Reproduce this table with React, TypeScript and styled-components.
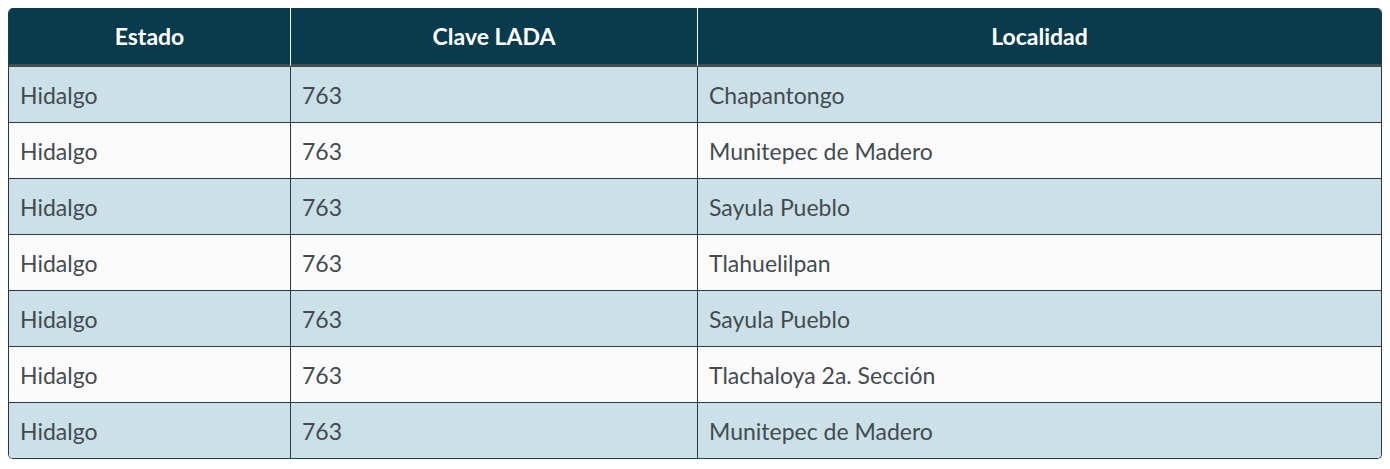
import React from 'react';
import styled, { createGlobalStyle } from 'styled-components';

const GlobalStyle = createGlobalStyle`
	body {
		margin: 8px;
		background: #ffffff;
		font-family: Lato, 'Open Sans', sans-serif;
	}
`;

const Table = styled.table`
	width: 100%;
	border-collapse: separate;
	border-spacing: 0;
	border: 1px solid #1d3d48;
	border-top: none;
	border-radius: 5px;
	overflow: hidden;
	box-shadow: 0 1px 3px rgba(0, 0, 0, 0.12);
	font-size: 23px;
	color: #444b4f;
`;

const HeadCell = styled.th`
	height: 56px;
	padding: 0 12px;
	background-color: #083b4b;
	color: #ffffff;
	font-weight: bold;
	font-size: 23px;
	text-align: center;
	border-bottom: 3px solid #4a4c4e;
	border-left: 1px solid #ffffff;
	&:first-child {
		border-left: none;
	}
`;

type RowProps = {
	$odd: boolean;
};
const Row = styled.tr<RowProps>`
	background-color: ${(props) => (props.$odd ? '#cbe0e7' : '#fbfbfb')};
	&:last-child > td {
		border-bottom: none;
	}
`;

const Cell = styled.td`
	height: 55px;
	padding: 0 11px;
	border-bottom: 1px solid #2c3a40;
	border-left: 1px solid #2c3a40;
	&:first-child {
		border-left: none;
	}
`;

const rows = [
	['Hidalgo', '763', 'Chapantongo'],
	['Hidalgo', '763', 'Munitepec de Madero'],
	['Hidalgo', '763', 'Sayula Pueblo'],
	['Hidalgo', '763', 'Tlahuelilpan'],
	['Hidalgo', '763', 'Sayula Pueblo'],
	['Hidalgo', '763', 'Tlachaloya 2a. Sección'],
	['Hidalgo', '763', 'Munitepec de Madero'],
];

const App = () => {
	return (
		<>
			<GlobalStyle />
			<Table>
				<colgroup>
					<col style={{ width: 281 }} />
					<col style={{ width: 407 }} />
					<col />
				</colgroup>
				<thead>
					<tr>
						<HeadCell>Estado</HeadCell>
						<HeadCell>Clave LADA</HeadCell>
						<HeadCell>Localidad</HeadCell>
					</tr>
				</thead>
				<tbody>
					{rows.map((r, i) => (
						<Row key={i} $odd={i % 2 == 0}>
							{r.map((c, j) => (
								<Cell key={j}>{c}</Cell>
							))}
						</Row>
					))}
				</tbody>
			</Table>
		</>
	);
};

export default App;
